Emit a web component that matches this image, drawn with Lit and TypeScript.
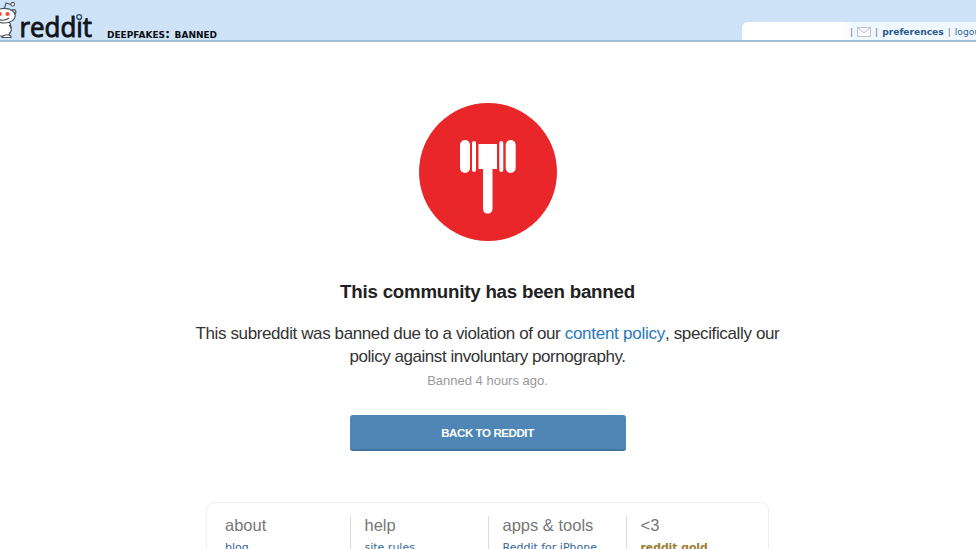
import { LitElement, html, css } from "lit";
import { customElement } from "lit/decorators.js";

@customElement("site-header")
class SiteHeader extends LitElement {
  static styles = css`
    :host { display: flex; box-sizing: border-box; height: 42px; justify-content: space-between; align-items: flex-end;
      background: #cee3f8; border-bottom: 2px solid #a0bfd4; overflow: hidden; }
    .brand { display: flex; align-items: flex-end; height: 40px; }
    .logo { display: block; width: 107px; height: 40px; }
    .word { font: 400 28px "Open Sans", sans-serif; fill: #10151c; stroke: #10151c; stroke-width: 1px; stroke-linejoin: round; }
    .name { font: bold 12.75px/13px "DejaVu Sans", sans-serif; font-variant: small-caps; color: #0a0f14; white-space: nowrap; }
    .user { display: flex; align-items: center; box-sizing: border-box; width: 234px; height: 18px; padding: 2px 0 0 108px; gap: 4px;
      background: linear-gradient(90deg, #fff 0 100px, #eff7ff 112px); border-top-left-radius: 6px; white-space: nowrap;
      font: 9.2px/16px "DejaVu Sans", sans-serif; color: #777; }
    .mail { width: 14px; height: 10px; flex: none; }
    a { color: #336699; }
    .pref { font-weight: bold; color: #2b5c8f; letter-spacing: -.05px; }
  `;
  render() {
    return html`
      <div class="brand">
        <svg class="logo" viewBox="0 0 107 40">
          <g fill="#fff" stroke="#4a5560" stroke-width="1.1">
            <path d="M4 10 L6 3 L11 4.5" fill="none"/>
            <circle cx="12.7" cy="4.2" r="1.8"/>
            <circle cx="13.5" cy="12" r="2.4"/>
            <path d="M-2 21 H8 C12 24 12 32 8 36 H-2 Z"/>
            <path d="M9 25 C12 27 12 32 9 33"/>
            <path d="M2 37 Q6 33 11 36 V37.5 H2Z"/>
            <ellipse cx="4.4" cy="15.7" rx="10.8" ry="7.3"/>
            <path d="M-2 19 Q4 22 9 18" fill="none"/>
          </g>
          <circle cx="7.5" cy="14" r="2" fill="#f04b28"/><circle cx="-.3" cy="14" r="2" fill="#f04b28"/>
          <text class="word" x="19.5" y="37" textLength="72.5" lengthAdjust="spacingAndGlyphs">reddit</text>
          <circle cx="79.2" cy="17" r="2.4" fill="#cee3f8" stroke="#3a4650" stroke-width="1.3"/>
        </svg>
        <span class="name">deepfakes: banned</span>
      </div>
      <div class="user">
        <span>|</span>
        <svg class="mail" viewBox="0 0 14 10" fill="#f8fbff" stroke="#c4c4c8">
          <path d="M.5 .5H13.5V9.5H.5Z M.5 .5L7 6L13.5 .5"/>
        </svg>
        <span>|</span><a class="pref">preferences</a><span>|</span><a>logout</a>
      </div>`;
  }
}

@customElement("ban-notice")
class BanNotice extends LitElement {
  static styles = css`
    :host { display: flex; flex-direction: column; align-items: center; padding-top: 61px; width: 975px;
      font-family: "Liberation Sans", Arial, sans-serif; text-align: center; }
    .seal { display: block; width: 138px; height: 138px; }
    h1 { margin: 39px 0 0; font-size: 18.7px; line-height: 24px; color: #222; letter-spacing: -.21px; }
    p { margin: 18px 0 0; font-size: 17px; line-height: 23px; color: #333; letter-spacing: -.36px; white-space: nowrap; }
    .lead { letter-spacing: -.39px; }
    .tight { letter-spacing: -.45px; }
    a { color: #2779bd; letter-spacing: -.26px; }
    .when { margin-top: 5px; font-size: 13px; line-height: 16px; color: #999; }
    button { margin: 26px 0 0; padding: 1px 0 0; width: 276px; height: 36px; border: 0; border-bottom: 2px solid #40739e; border-radius: 3px;
      background: #4f86b5; color: #fff; font: bold 11.5px "Liberation Sans", Arial, sans-serif; letter-spacing: -.4px; }
  `;
  render() {
    return html`
      <svg class="seal" viewBox="0 0 138 138">
        <circle cx="69" cy="69" r="69" fill="#e9262a"/>
        <g fill="#fff">
          <rect x="41" y="37" width="10" height="33" rx="5"/>
          <rect x="53" y="38" width="4" height="31" rx="2"/>
          <rect x="59.5" y="41" width="18.5" height="25"/>
          <rect x="80.3" y="38" width="4" height="31" rx="2"/>
          <rect x="86.7" y="37" width="10" height="33" rx="5"/>
          <path d="M64 64H73.5V106A4.75 4.75 0 0 1 64 106Z"/>
        </g>
      </svg>
      <h1>This community has been banned</h1>
      <p><span class="lead">This subreddit was banned due to a violation of our </span><a>content policy</a>, specifically our<br><span class="tight">policy against involuntary pornography.</span></p>
      <div class="when">Banned 4 hours ago.</div>
      <button>BACK TO REDDIT</button>`;
  }
}

@customElement("site-footer")
class SiteFooter extends LitElement {
  static styles = css`
    :host { display: flex; box-sizing: border-box; width: 563px; height: 120px; margin: 51px 0 0 206px; padding-top: 13px;
      border: 1px solid #eee; border-radius: 8px; }
    .col { box-sizing: border-box; width: 138px; padding-left: 14px; border-left: 1px solid #ddd; white-space: nowrap; }
    .col:first-child { width: 143px; padding-left: 18px; border: 0; }
    .col + .col { padding-left: 13.5px; }
    h2 { margin: 0; font: 16.5px/18px "Liberation Sans", Arial, sans-serif; color: #777; }
    a { display: block; margin-top: 6px; font: 11px/16px "DejaVu Sans", sans-serif; color: #336699; }
    .gold { font-size: 10.8px; font-weight: bold; color: #9a7d2e; }
  `;
  render() {
    const cols = [["about", "blog"], ["help", "site rules"], ["apps & tools", "Reddit for iPhone"], ["<3", "reddit gold"]];
    return cols.map(([t, l]) => html`<div class="col"><h2>${t}</h2><a class=${l === "reddit gold" ? "gold" : ""}>${l}</a></div>`);
  }
}

@customElement("app-root")
class AppRoot extends LitElement {
  static styles = css`
    :host { display: block; height: 549px; overflow: hidden; background: #fff; }
  `;
  render() {
    return html`<site-header></site-header><ban-notice></ban-notice><site-footer></site-footer>`;
  }
}
